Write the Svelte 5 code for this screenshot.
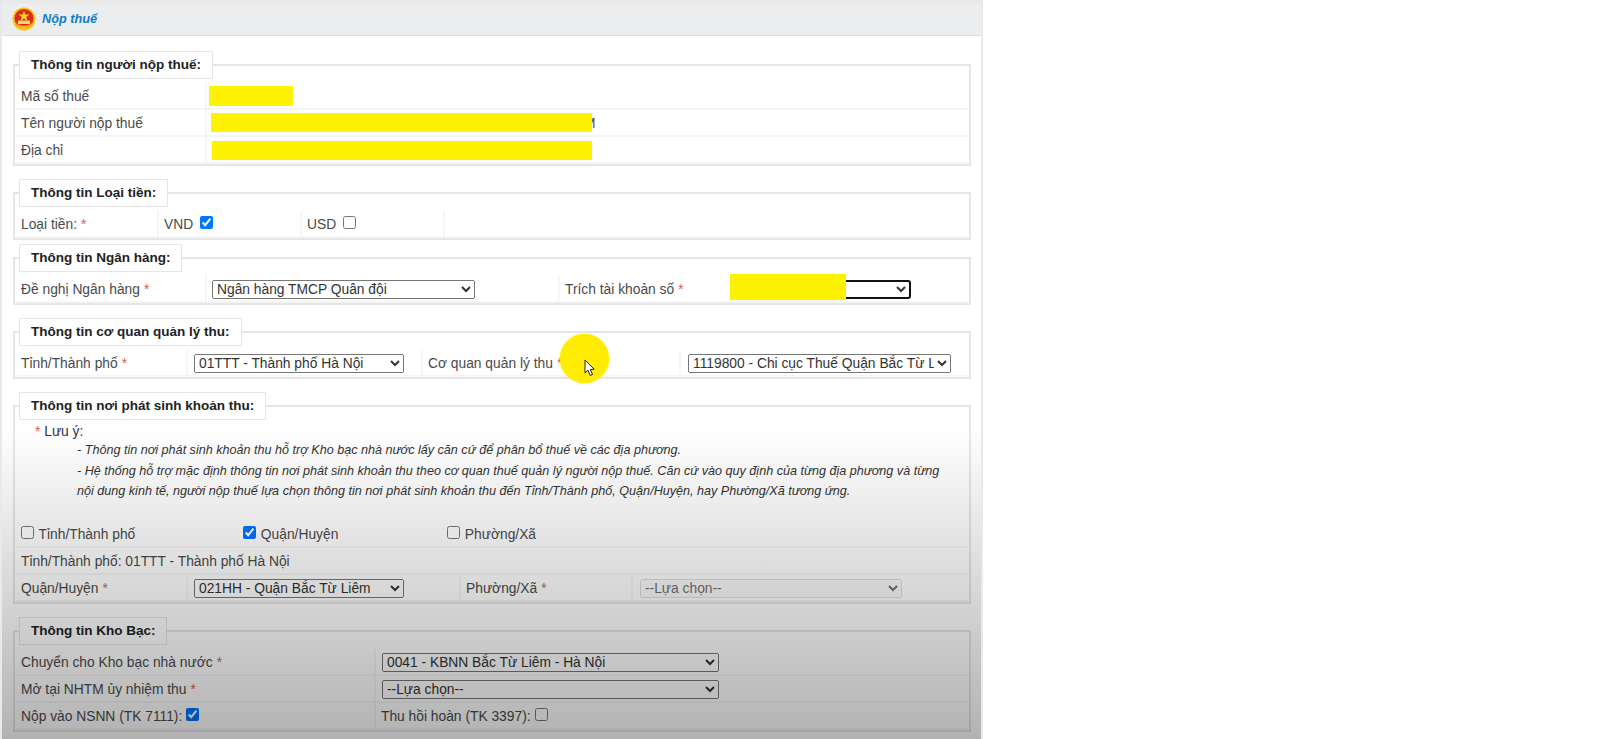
<script>
  const required = '*';
</script>

<div class="panel">
  <div class="head">
    <svg class="emblem" viewBox="0 0 24 24" width="24" height="24">
      <circle cx="12" cy="12" r="11.5" fill="#f7c21a" />
      <circle cx="12" cy="11.5" r="9.5" fill="#dd2a1b" />
      <polygon points="12,3.5 13.4,7.6 17.6,7.6 14.2,10.1 15.5,14 12,11.6 8.5,14 9.8,10.1 6.4,7.6 10.6,7.6" fill="#fbd01e" />
      <rect x="6" y="13.5" width="12" height="3.5" fill="#f5d27a" />
      <path d="M4 15 Q6 21 12 21.5 Q18 21 20 15 L17.5 17.5 Q12 20 6.500 17.500 Z" fill="#f7b71a" />
    </svg>
    <span class="title">Nộp thuế</span>
  </div>

  <div class="body">
    <fieldset class="first">
      <legend>Thông tin người nộp thuế:</legend>
      <div class="row c-info"><div class="cell">Mã số thuế</div><div class="cell rel"><span class="redact r-tax"></span></div></div>
      <div class="row c-info"><div class="cell">Tên người nộp thuế</div><div class="cell rel"><span class="tail">M</span><span class="redact r-name"></span></div></div>
      <div class="row c-info"><div class="cell">Địa chỉ</div><div class="cell rel"><span class="redact r-addr"></span></div></div>
    </fieldset>

    <fieldset>
      <legend>Thông tin Loại tiền:</legend>
      <div class="row c-money">
        <div class="cell">Loại tiền: <i class="req">{required}</i></div>
        <div class="cell">VND <input type="checkbox" checked /></div>
        <div class="cell">USD <input type="checkbox" /></div>
        <div class="cell"></div>
      </div>
    </fieldset>

    <fieldset class="tight">
      <legend>Thông tin Ngân hàng:</legend>
      <div class="row c-bank">
        <div class="cell">Đề nghị Ngân hàng <i class="req">{required}</i></div>
        <div class="cell"><select class="w-bank"><option>Ngân hàng TMCP Quân đội</option></select></div>
        <div class="cell">Trích tài khoản số <i class="req">{required}</i></div>
        <div class="cell rel">
          <select class="w-acc focus"><option></option></select>
          <span class="redact r-acc"></span>
        </div>
      </div>
    </fieldset>

    <fieldset>
      <legend>Thông tin cơ quan quản lý thu:</legend>
      <div class="row c-org">
        <div class="cell">Tỉnh/Thành phố <i class="req">{required}</i></div>
        <div class="cell"><select class="w-city"><option>01TTT - Thành phố Hà Nội</option></select></div>
        <div class="cell">Cơ quan quản lý thu <i class="req">{required}</i></div>
        <div class="cell"><select class="w-org"><option>1119800 - Chi cục Thuế Quận Bắc Từ Liêm</option></select></div>
      </div>
    </fieldset>

    <fieldset>
      <legend>Thông tin nơi phát sinh khoản thu:</legend>
      <div class="note">
        <div class="note-head"><i class="req">{required}</i> Lưu ý:</div>
        <p>- Thông tin nơi phát sinh khoản thu hỗ trợ Kho bạc nhà nước lấy căn cứ để phân bổ thuế về các địa phương.</p>
        <p>- Hệ thống hỗ trợ mặc định thông tin nơi phát sinh khoản thu theo cơ quan thuế quản lý người nộp thuế. Căn cứ vào quy định của từng địa phương và từng nội dung kinh tế, người nộp thuế lựa chọn thông tin nơi phát sinh khoản thu đến Tỉnh/Thành phố, Quận/Huyện, hay Phường/Xã tương ứng.</p>
      </div>
      <div class="row">
        <div class="cell checks">
          <label class="c1"><input type="checkbox" /> Tỉnh/Thành phố</label>
          <label class="c2"><input type="checkbox" checked /> Quận/Huyện</label>
          <label><input type="checkbox" /> Phường/Xã</label>
        </div>
      </div>
      <div class="row"><div class="cell">Tỉnh/Thành phố: 01TTT - Thành phố Hà Nội</div></div>
      <div class="row c-ward">
        <div class="cell">Quận/Huyện <i class="req">{required}</i></div>
        <div class="cell"><select class="w-city"><option>021HH - Quận Bắc Từ Liêm</option></select></div>
        <div class="cell">Phường/Xã <i class="req">{required}</i></div>
        <div class="cell"><select class="w-ward" disabled><option>--Lựa chọn--</option></select></div>
      </div>
    </fieldset>

    <fieldset>
      <legend>Thông tin Kho Bạc:</legend>
      <div class="row c-kb">
        <div class="cell">Chuyển cho Kho bạc nhà nước <i class="req">{required}</i></div>
        <div class="cell"><select class="w-kb"><option>0041 - KBNN Bắc Từ Liêm - Hà Nội</option></select></div>
      </div>
      <div class="row c-kb">
        <div class="cell">Mở tại NHTM ủy nhiệm thu <i class="req">{required}</i></div>
        <div class="cell"><select class="w-kb"><option>--Lựa chọn--</option></select></div>
      </div>
      <div class="row c-kb">
        <div class="cell">Nộp vào NSNN (TK 7111): <input class="near" type="checkbox" checked /></div>
        <div class="cell">Thu hồi hoàn (TK 3397): <input class="near" type="checkbox" /></div>
      </div>
    </fieldset>
  </div>

  <!-- video fade over the lower half of the page -->
  <div class="fade"></div>
  <div class="spot"></div>
  <svg class="cursor" viewBox="0 0 12 18" width="12" height="18">
    <path d="M1 1 L1 14 L4 11.200 L6.200 16.500 L8.500 15.500 L6.300 10.500 L10.200 10.200 Z" fill="#fff" stroke="#222" stroke-width="1" />
  </svg>
</div>

<style>
  :global(body) {
    margin: 0;
    background: #fff;
    font-family: "Liberation Sans", Arial, sans-serif;
    font-size: 13.8px;
    color: #4a4a4a;
  }

  .panel {
    position: relative;
    width: 979px;
    height: 736px;
    overflow: hidden;
    background: #fff;
    border: 2px solid #e9e9e9;
    border-bottom: 0;
    border-top-width: 3px;
  }

  .head {
    display: flex;
    align-items: center;
    gap: 6px;
    height: 32px;
    padding-left: 10px;
    background: #ecedef;
    border-bottom: 1px solid #dddddd;
  }

  .title {
    color: #0f7fc4;
    font-size: 12.700px;
    font-weight: bold;
    font-style: italic;
  }

  .body {
    padding: 15px 10px 0 11px;
  }

  fieldset {
    margin: 13px 0 0;
    padding: 4px 1px 0 1px;
    border: 2px solid #e6e6e6;
    border-radius: 0;
    min-width: 0;
  }

  fieldset.first {
    margin-top: 0;
  }

  fieldset.tight {
    margin-top: 4px;
  }

  legend {
    margin-left: 3px;
    padding: 0 11px;
    height: 26px;
    line-height: 26px;
    background: #fff;
    border: 1px solid #e6e6e6;
    color: #222;
    font-size: 13.500px;
    font-weight: bold;
  }

  .row {
    display: grid;
    gap: 2px;
    background: #f5f5f5;
    padding-bottom: 2px;
  }

  .c-info { grid-template-columns: 189px 1fr; }
  .c-money { grid-template-columns: 141px 141px 141px 1fr; }
  .c-bank { grid-template-columns: 189px 351px 170px 1fr; }
  .c-org { grid-template-columns: 170px 233px 256px 1fr; }
  .c-ward { grid-template-columns: 170px 271px 170px 1fr; }
  .c-kb { grid-template-columns: 358px 1fr; }

  .cell {
    display: flex;
    align-items: center;
    gap: 4px;
    box-sizing: border-box;
    height: 25px;
    padding: 1px 0 0 5px;
    background: #fff;
    min-width: 0;
  }

  .rel {
    position: relative;
  }

  .req {
    color: #e05555;
    font-style: normal;
  }

  select {
    height: 19px;
    font-family: inherit;
    font-size: 13.800px;
    color: #333;
  }

  .w-bank { width: 263px; }
  .w-acc { width: 173px; margin-left: 1px; }
  .w-city { width: 210px; margin-left: 1px; }
  .w-org { width: 263px; margin-left: 2px; }
  .w-ward { width: 262px; margin-left: 2px; }
  .w-kb { width: 337px; margin-left: 1px; }

  .focus {
    border: 2px solid #111;
    border-radius: 3px;
    background: #fff;
  }

  input[type="checkbox"] {
    width: 13px;
    height: 13px;
    margin: 0 0 3px 3px;
  }

  input.near {
    margin-left: 0;
  }

  .redact {
    position: absolute;
    background: #fff200;
  }

  .r-tax { left: 2px; top: 3px; width: 84px; height: 20px; }
  .r-name { left: 4px; top: 3px; width: 381px; height: 19px; }
  .r-addr { left: 5px; top: 4px; width: 380px; height: 19px; }
  .r-acc { left: -2px; top: -2px; width: 116px; height: 26px; }

  .tail {
    margin-left: 372px;
  }

  .note {
    height: 97px;
    color: #333;
  }

  .note-head {
    padding: 0 0 0 19px;
  }

  .note p {
    margin: 0;
    padding-left: 61px;
    width: 870px;
    font-size: 12.600px;
    font-style: italic;
    line-height: 20.500px;
  }

  .note-head + p {
    margin-top: 1px;
  }

  .checks {
    gap: 0;
  }

  .checks label {
    display: block;
  }

  .checks input {
    margin: 0 1px 0 0;
  }

  .c1 { width: 222px; }
  .c2 { width: 204px; }

  .fade {
    position: absolute;
    left: -2px;
    right: -2px;
    top: 425px;
    bottom: 0;
    background: linear-gradient(to bottom, rgba(0, 0, 0, 0), rgba(0, 0, 0, 0.3));
    pointer-events: none;
  }

  .spot {
    position: absolute;
    left: 558px;
    top: 331px;
    width: 49px;
    height: 49px;
    border-radius: 50%;
    background: #ffec00;
    box-shadow: 0 0 2px #ffec00;
  }

  .cursor {
    position: absolute;
    left: 582px;
    top: 356px;
  }
</style>
